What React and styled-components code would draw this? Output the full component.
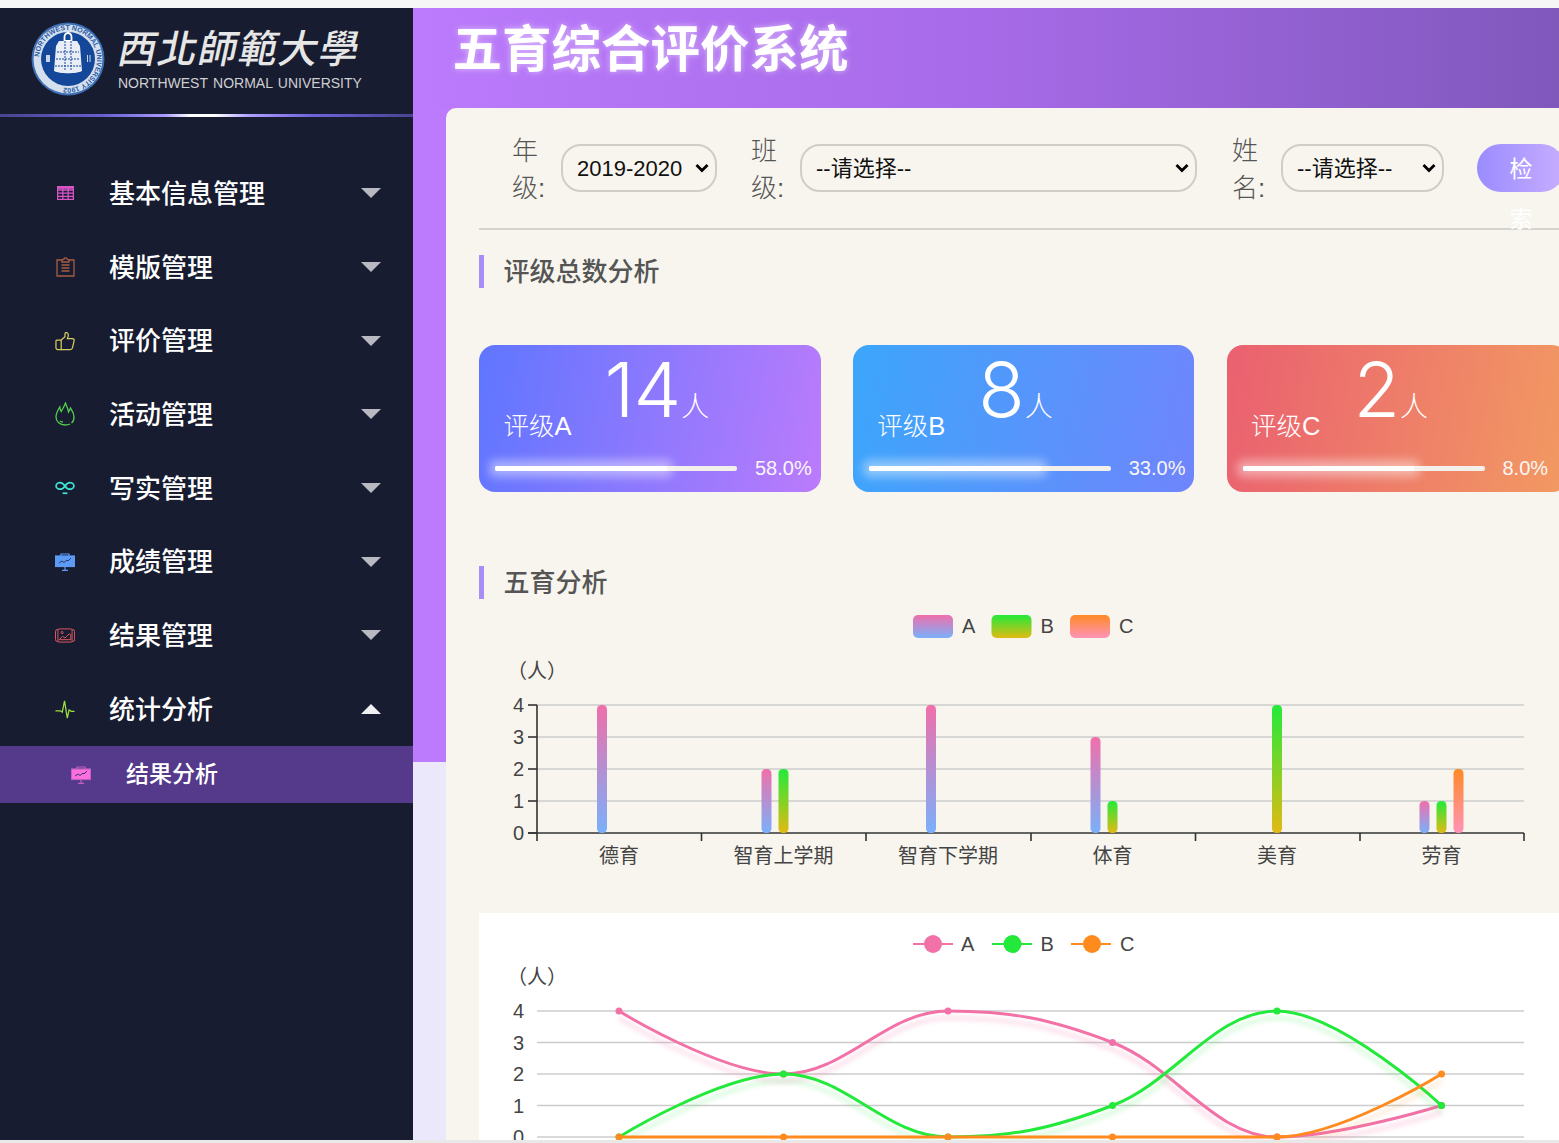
import React from "react";
import styled, { createGlobalStyle } from "styled-components";

const Global = createGlobalStyle`
  html, body { margin: 0; padding: 0; height: 100%; overflow: hidden; background: #f6f6f6; }
  body { padding-top: 8px; box-sizing: border-box; font-family: "Liberation Sans", "Noto Sans CJK SC", sans-serif; }
  #root { height: 1135px; }
`;

const Frame = styled.div`display: flex; height: 1132px; overflow: hidden;`;
const BottomEdge = styled.div`height: 3px; background: #e8e8e8;`;

const Sidebar = styled.aside`width: 413px; flex-shrink: 0; background: #171c30; color: #fff;`;
const Brand = styled.div`display: flex; align-items: center; gap: 13px; height: 106px; padding: 0 0 5px 31px; box-sizing: border-box;`;
const BrandText = styled.div`display: flex; flex-direction: column; width: 246px; color: #e6e6e6;`;
const BrandCn = styled.div`
  font-family: "Noto Sans CJK TC", sans-serif; font-weight: 500; font-size: 39px; line-height: 40px;
  letter-spacing: 1.3px; margin: 0 0 8px -3px; white-space: nowrap; transform: skewX(-12deg); transform-origin: left bottom;
`;
const BrandEn = styled.div`font-size: 14px; line-height: 18px; word-spacing: 1.500px; white-space: nowrap; color: #cfcfd2;`;
const GlowLine = styled.div`
  height: 3px;
  background: linear-gradient(90deg, #4a4390 0%, #6a5fd0 25%, #a99cff 40%, #fff 46%, #fff 52%, #b0a2ff 60%, #7064dc 75%, #4a4390 100%);
`;
const Menu = styled.nav`padding-top: 39.5px;`;
const MenuRow = styled.div`
  display: flex; align-items: center; gap: 34px; height: 73.7px; padding: 0 32px 0 55px;
  font-size: 26px; font-weight: 500;
`;
const SubRow = styled.div`
  display: flex; align-items: center; gap: 35px; height: 57px; padding-left: 71px;
  font-size: 23px; font-weight: 500; background: #553a8c;
`;
const IconBox = styled.span`display: flex; justify-content: center; align-items: center; width: 20px; flex-shrink: 0;`;
const MenuLabel = styled.span`flex: 1; padding-bottom: ${p => p.$lift || 4}px;`;
const Caret = styled.span`
  width: 0; height: 0; border-left: 10px solid transparent; border-right: 10px solid transparent;
  ${p => (p.$up ? "border-bottom: 10px solid #f0f0f2;" : "border-top: 10px solid #b9b9c2;")}
`;

const Main = styled.main`
  flex: 1; min-width: 0; overflow: hidden;
  background: linear-gradient(#bb7bfc 0 754px, #ebe8fc 754px);
`;
const Header = styled.header`
  height: 100px; padding-left: 39.500px; box-sizing: border-box;
  background: linear-gradient(90deg, #bb7bfc 0%, #a76ae8 50%, #8058bc 100%);
`;
const Title = styled.h1`
  margin: 0; font-size: 49.500px; line-height: 84px; font-weight: 700; color: #fff; white-space: nowrap;
  text-shadow: 0 0 6px rgba(255,255,255,.5);
`;
const Panel = styled.section`
  width: 1160px; margin-left: 33px; min-height: 1032px; padding-left: 33px; box-sizing: border-box;
  background: #f8f5ee; border-top-left-radius: 10px;
`;
const FilterRow = styled.div`
  display: flex; align-items: flex-start; height: 122px; padding: 25px 0 0 33px; box-sizing: border-box;
  border-bottom: 2px solid #d5d3cd;
`;
const FieldLabel = styled.label`
  width: 36px; margin-right: 13px; flex-shrink: 0; font-size: 26px; line-height: 37px; color: #555;
  font-weight: 300;
`;
const Select = styled.select`
  appearance: none;
  width: ${p => p.$w}px; height: 48px; margin: 11px ${p => p.$mr}px 0 0; padding: 0 26px 0 14px; flex-shrink: 0;
  box-sizing: border-box; color: #111;
  border: 2px solid #cfcdc8; border-radius: 20px;
  font-family: inherit; font-size: 22px;
  background: transparent url("data:image/svg+xml,%3Csvg xmlns='http://www.w3.org/2000/svg' viewBox='0 0 14 10'%3E%3Cpath d='M1.500 2L7 7.500 12.500 2' fill='none' stroke='%23000' stroke-width='2.800'/%3E%3C/svg%3E") no-repeat right 6px center / 14px 10px;
`;
const SearchButton = styled.button`
  width: 88px; height: 48px; margin-top: 11px; padding: 0 32px; box-sizing: border-box; flex-shrink: 0;
  border: 0; border-radius: 24px; background: linear-gradient(90deg, #9a8cff, #c8aeff);
  color: #fff; font-family: inherit; font-size: 23px; line-height: 50px; text-align: center;
  display: block; overflow: visible;
`;
const SectionTitle = styled.h2`
  margin: ${p => p.$mt}px 0 0; height: 33px; padding-left: 19.500px; box-sizing: border-box;
  border-left: 5px solid #a78df6; color: #555; font-size: 26px; line-height: 34px; font-weight: 500;
`;
const Cards = styled.div`display: flex; gap: 32.250px; margin-top: 57px;`;
const Card = styled.div`
  width: 341.500px; height: 147px; flex-shrink: 0; border-radius: 16px; overflow: hidden; color: #fff;
  background: linear-gradient(100deg, ${p => p.$from}, ${p => p.$to});
`;
const CardTop = styled.div`display: flex; align-items: flex-end; gap: 33px; height: 94px; padding-left: 24.500px;`;
const CardLabel = styled.span`font-size: 25.500px; line-height: 25px; font-weight: 300; white-space: nowrap;`;
const Count = styled.span`display: flex; align-items: baseline; margin-bottom: 11px;`;
const CountNum = styled.span`font-family: Inter, sans-serif; font-weight: 300; font-size: 76px; line-height: 78px; letter-spacing: -1px;`;
const CountUnit = styled.span`font-size: 28px; line-height: 28px; font-weight: 300; margin-left: 1px;`;
const CardBottom = styled.div`display: flex; align-items: center; gap: 18px; margin-top: 18px; padding-left: 16px;`;
const Track = styled.div`position: relative; width: 242px; height: 5px; border-radius: 2px; background: #f3efea;`;
const Fill = styled.div`
  position: absolute; left: 0; top: 0; height: 100%; border-radius: 2px; background: #fff;
  box-shadow: 0 0 10px 6px rgba(255,255,255,.42);
`;
const Percent = styled.span`font-size: 20px; line-height: 23px; color: #fbf6f6; white-space: nowrap;`;

const ChartBlock = styled.div`margin-top: ${p => p.$mt || 0}px; height: ${p => p.$h}px; background: ${p => p.$bg || "transparent"};`;
const ChartSvg = styled.svg`display: block; overflow: hidden;`;
const ChartText = styled.text`fill: #444; font-size: 20px; font-family: "Liberation Sans", "Noto Sans CJK SC", sans-serif;`;
const GridLine = styled.line`stroke: #ccc; stroke-width: 1.5;`;
const AxisLine = styled.line`stroke: #333; stroke-width: 1.6;`;
const Curve = styled.path`
  fill: none; stroke: ${p => p.$c}; stroke-width: 3;
  filter: drop-shadow(0 7px 2.500px ${p => p.$glow});
`;

const Seal = () => (
  <svg width="74" height="74" viewBox="-37 -37 74 74">
    <defs>
      <path id="sealArc" d="M-29 0a29 29 0 1 1 58 0a29 29 0 1 1 -58 0" />
    </defs>
    <circle r="36.500" fill="#3d6fb5" />
    <circle r="34.500" fill="#d5e0ee" />
    <text fontSize="7" fontFamily="Liberation Sans" fill="#2a5aa3" fontWeight="700">
      <textPath href="#sealArc" startOffset="2">NORTHWEST NORMAL UNIVERSITY 1902</textPath>
    </text>
    <circle r="27" fill="#14479a" />
    <path d="M-3.500 -22a3.500 4 0 0 1 7 0v4h-7z" fill="none" stroke="#fff" strokeWidth="1.800" />
    <path d="M-9 -18h18l3 5 2 25c-5 3 -23 3 -28 0l2 -25z" fill="#e9eef6" />
    <path d="M-11 -7h22M-12 0h24M-13 7h26M-3 -18v30M3 -18v30" stroke="#14479a" strokeWidth="1" strokeDasharray="2 1" />
    <path d="M-22 -4h4v7h-4zM19 -4h1v7h-1zM21.500 -4h1v7h-1z" fill="#cbd7e8" />
  </svg>
);

const s = { fill: "none", strokeWidth: 1.3 };
const GridIcon = () => (
  <svg width="17" height="14" viewBox="0 0 17 14" {...s} stroke="#d955c6">
    <rect x=".6" y=".6" width="15.800" height="12.800" />
    <path d="M.6 4h15.800M.6 7.200h15.800M.6 10.300h15.800M5.800 .6v12.800M11.200 .6v12.800" />
    <path d="M.6 1.800h15.800" strokeWidth="2" />
  </svg>
);
const ClipIcon = () => (
  <svg width="19" height="20" viewBox="0 0 19 20" {...s} stroke="#a85c44">
    <path d="M6 3H1v16h17V3h-5" />
    <path d="M6 5V3l2-1c0-1.500 3-1.500 3 0l2 1v2z" />
    <path d="M5.500 8h8M5.500 11h8M5.500 14h8" />
  </svg>
);
const ThumbIcon = () => (
  <svg width="21" height="20" viewBox="0 0 21 20" {...s} stroke="#d5cd62">
    <path d="M1 10a1 1 0 0 1 1-1h4.500v10H3a2 2 0 0 1-2-2z" />
    <path d="M6.500 9l4-3.500V2.500c0-1.200 1.200-1.800 2.200-1.100 1.300.9 1.500 2.600 1 4.200L13 7.500h5.300c1.300 0 2.100 1 1.800 2.200l-1.700 7.200c-.3 1.300-1.200 2.100-2.500 2.100H6.500" />
  </svg>
);
const FlameIcon = () => (
  <svg width="20" height="24" viewBox="0 0 20 24" {...s} stroke="#52d04c">
    <path d="M15 22c-1.500 .8-3.200 1-5 1-5 0-9-3.200-9-8 0-4 1.800-6.500 3.800-10 .2 2 .5 3.300 1.400 4.600C7.500 7 9.500 4 10.500 1c.8 3 2.400 5 3 9 .8-1.200 1.500-2.500 2-4 1.500 2.500 3.500 5 3.500 9 0 3-1 5-2.500 6" />
    <path d="M5 19c1 .7 2 1 3 1" />
  </svg>
);
const LoopIcon = () => (
  <svg width="21" height="14" viewBox="0 0 21 14" fill="none" strokeWidth="1.800" stroke="#3fe3d5">
    <path d="M10.500 5C8.500 2 5.500 .8 3.200 1.800.4 3 .4 6.600 3.200 7.800c2.300 1 5.300 0 7.300-3 2-3 5-4 7.300-3 2.800 1.200 2.800 4.800 0 6-2.300 1-5.300 0-7.300-3" />
    <path d="M8 12.500h5" />
  </svg>
);
const BoardIcon = ({ fill, edge }) => (
  <svg width="20" height="18" viewBox="0 0 20 18" fill="none" strokeWidth="1.200" stroke={edge}>
    <path d="M6 3V1h8v2" />
    <rect x=".5" y="3" width="19" height="10.500" fill={fill} />
    <path d="M10 13.500v3.500M7 17.400h6" />
    <path d="M4 10l3-2 2 1.500 3-2.500 1 1 3-3" stroke="#30386a" strokeWidth="1" />
  </svg>
);
const PhotoIcon = () => (
  <svg width="24" height="17" viewBox="0 0 24 17" fill="none" strokeWidth="1.200" stroke="#d9585f">
    <path d="M4 1.500H2.500A2 2 0 0 0 .6 3.500v10a2 2 0 0 0 2 2H4" />
    <path d="M20 1.500h1.500a2 2 0 0 1 2 2v10a2 2 0 0 1-2 2H20" />
    <rect x="3.500" y=".6" width="17" height="15.800" rx="1.500" />
    <circle cx="8.500" cy="5" r="1.300" />
    <path d="M5 13.500l4-4 3 2 5-5 2 1v6z" />
  </svg>
);
const PulseIcon = () => (
  <svg width="22" height="21" viewBox="0 0 22 21" fill="none" strokeWidth="1.400" stroke="#9be03c">
    <path d="M.5 12H6l2 1.500L10.500 1l3 19 2-9 2.500 1.500h3.500" />
  </svg>
);

const menu = [
  ["基本信息管理", <GridIcon />],
  ["模版管理", <ClipIcon />],
  ["评价管理", <ThumbIcon />],
  ["活动管理", <FlameIcon />],
  ["写实管理", <LoopIcon />],
  ["成绩管理", <BoardIcon fill="#5b9bf5" edge="#5b9bf5" />],
  ["结果管理", <PhotoIcon />],
  ["统计分析", <PulseIcon />, true],
];

const cards = [
  { label: "评级A", n: 14, pct: "58.0%", from: "#5f76ff", to: "#bb7bfc" },
  { label: "评级B", n: 8, pct: "33.0%", from: "#3ca6fb", to: "#6f85fc" },
  { label: "评级C", n: 2, pct: "8.0%", from: "#ea6070", to: "#f29a62" },
];

const cats = ["德育", "智育上学期", "智育下学期", "体育", "美育", "劳育"];
const catX = [619, 783.5, 948, 1112.5, 1277, 1441.5];
const ticks = [537, 701.5, 866, 1031, 1195.5, 1360, 1524];
const series = [
  { key: "A", data: [4, 2, 4, 3, 0, 1], c: "#f272a8", glow: "rgba(242,114,168,.32)", off: -22, top: "#f06faa", bot: "#7ab0fb" },
  { key: "B", data: [0, 2, 0, 1, 4, 1], c: "#22e93a", glow: "rgba(34,233,58,.24)", off: -5, top: "#22ea3a", bot: "#e2ba12" },
  { key: "C", data: [0, 0, 0, 0, 0, 2], c: "#ff8a1e", glow: "rgba(255,138,30,.24)", off: 12, top: "#ff8a26", bot: "#ff93b8" },
];

const BarChart = () => {
  const y = v => 833 - v * 32;
  return (
    <ChartSvg width="1100" height="313" viewBox="479 600 1100 313">
      <defs>
        {series.map(se => (
          <linearGradient key={se.key} id={`bar${se.key}`} x1="0" y1="0" x2="0" y2="1">
            <stop offset="0" stopColor={se.top} />
            <stop offset="1" stopColor={se.bot} />
          </linearGradient>
        ))}
      </defs>
      {series.map((se, i) => (
        <g key={se.key}>
          <rect x={913 + i * 78.5} y="615" width="40" height="23" rx="5" fill={`url(#bar${se.key})`} />
          <ChartText x={962 + i * 78.5} y="633">{se.key}</ChartText>
        </g>
      ))}
      <ChartText x="507" y="678">（人）</ChartText>
      {[1, 2, 3, 4].map(v => <GridLine key={v} x1="537" x2="1524" y1={y(v)} y2={y(v)} />)}
      {[0, 1, 2, 3, 4].map(v => (
        <g key={v}>
          <AxisLine x1="528" x2="537" y1={y(v)} y2={y(v)} />
          <ChartText x="524" y={y(v) + 7} textAnchor="end">{v}</ChartText>
        </g>
      ))}
      <AxisLine x1="537" x2="537" y1="705" y2="833" />
      <AxisLine x1="528" x2="1524" y1="833" y2="833" />
      {ticks.map(t => <AxisLine key={t} x1={t} x2={t} y1="833" y2="841" />)}
      {cats.map((c, i) => <ChartText key={c} x={catX[i]} y="863" textAnchor="middle">{c}</ChartText>)}
      {series.map(se => se.data.map((v, i) => v > 0 && (
        <rect key={se.key + i} x={catX[i] + se.off} y={y(v)} width="10" height={v * 32} rx="4.5" fill={`url(#bar${se.key})`} />
      )))}
    </ChartSvg>
  );
};

const smooth = pts => {
  const slope = i => {
    if (i === 0 || i === pts.length - 1) return null;
    const [a, b, c] = [pts[i - 1], pts[i], pts[i + 1]];
    if ((b[1] - a[1]) * (c[1] - b[1]) <= 0) return 0;
    return (c[1] - a[1]) / (c[0] - a[0]);
  };
  let d = `M${pts[0][0]} ${pts[0][1]}`;
  for (let i = 0; i < pts.length - 1; i++) {
    const p = pts[i], q = pts[i + 1], h = (q[0] - p[0]) * 0.38;
    const m1 = slope(i), m2 = slope(i + 1);
    const c1 = m1 === null ? p : [p[0] + h, p[1] + m1 * h];
    const c2 = m2 === null ? q : [q[0] - h, q[1] - m2 * h];
    d += `C${c1[0]} ${c1[1]} ${c2[0]} ${c2[1]} ${q[0]} ${q[1]}`;
  }
  return d;
};

const LineChart = () => {
  const y = v => 1137 - v * 31.5;
  return (
    <ChartSvg width="1100" height="227" viewBox="479 913 1100 227">
      {series.map((se, i) => (
        <g key={se.key}>
          <line x1={913 + i * 79} x2={953 + i * 79} y1="944" y2="944" stroke={se.c} strokeWidth="2" />
          <circle cx={933 + i * 79.5} cy="944" r="9" fill={se.c} />
          <ChartText x={961 + i * 79.5} y="951">{se.key}</ChartText>
        </g>
      ))}
      <ChartText x="507" y="984">（人）</ChartText>
      {[0, 1, 2, 3, 4].map(v => (
        <g key={v}>
          <GridLine x1="537" x2="1524" y1={y(v)} y2={y(v)} />
          <ChartText x="524" y={y(v) + 7} textAnchor="end">{v}</ChartText>
        </g>
      ))}
      {series.map(se => {
        const pts = se.data.map((v, i) => [catX[i], y(v)]);
        return (
          <g key={se.key}>
            <Curve d={smooth(pts)} $c={se.c} $glow={se.glow} />
            {pts.map(p => <circle key={p[0]} cx={p[0]} cy={p[1]} r="3.5" fill={se.c} />)}
          </g>
        );
      })}
    </ChartSvg>
  );
};

export default function App() {
  return (
    <>
      <Global />
      <Frame>
        <Sidebar>
          <Brand>
            <Seal />
            <BrandText>
              <BrandCn>西北師範大學</BrandCn>
              <BrandEn>NORTHWEST NORMAL UNIVERSITY</BrandEn>
            </BrandText>
          </Brand>
          <GlowLine />
          <Menu>
            {menu.map(([label, icon, open]) => (
              <MenuRow key={label}>
                <IconBox>{icon}</IconBox>
                <MenuLabel>{label}</MenuLabel>
                <Caret $up={open} />
              </MenuRow>
            ))}
            <SubRow>
              <IconBox><BoardIcon fill="#ff6fe0" edge="#c060c0" /></IconBox>
              <MenuLabel $lift={5}>结果分析</MenuLabel>
            </SubRow>
          </Menu>
        </Sidebar>
        <Main>
          <Header><Title>五育综合评价系统</Title></Header>
          <Panel>
            <FilterRow>
              <FieldLabel>年级:</FieldLabel>
              <Select $w={156} $mr={34} defaultValue="2019-2020"><option>2019-2020</option></Select>
              <FieldLabel>班级:</FieldLabel>
              <Select $w={397} $mr={35}><option>--请选择--</option></Select>
              <FieldLabel>姓名:</FieldLabel>
              <Select $w={163} $mr={33}><option>--请选择--</option></Select>
              <SearchButton>检索</SearchButton>
            </FilterRow>
            <SectionTitle $mt={25}>评级总数分析</SectionTitle>
            <Cards>
              {cards.map(c => (
                <Card key={c.label} $from={c.from} $to={c.to}>
                  <CardTop>
                    <CardLabel>{c.label}</CardLabel>
                    <Count>
                      <CountNum>{c.n}</CountNum>
                      <CountUnit>人</CountUnit>
                    </Count>
                  </CardTop>
                  <CardBottom>
                    <Track><Fill style={{ width: "71%" }} /></Track>
                    <Percent>{c.pct}</Percent>
                  </CardBottom>
                </Card>
              ))}
            </Cards>
            <SectionTitle $mt={74}>五育分析</SectionTitle>
            <ChartBlock $mt={1} $h={313}><BarChart /></ChartBlock>
            <ChartBlock $h={227} $bg="#fff"><LineChart /></ChartBlock>
          </Panel>
        </Main>
      </Frame>
      <BottomEdge />
    </>
  );
}
